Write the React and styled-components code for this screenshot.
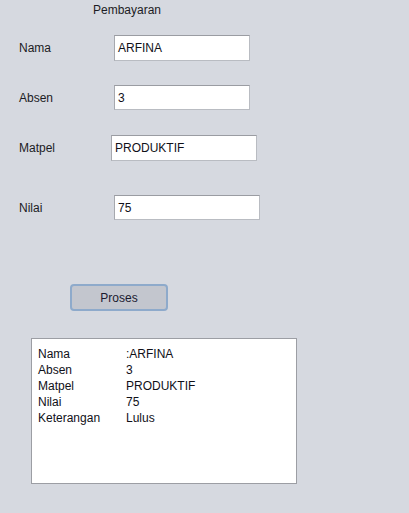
import React from "react";
import styled, { createGlobalStyle } from "styled-components";

const Global = createGlobalStyle`
  html, body {
    margin: 0;
    background: #d6d9e0;
  }
  body {
    font-family: "Liberation Sans", Arial, sans-serif;
    font-size: 12px;
    color: #1c1c24;
  }
`;

const Frame = styled.div`
  width: 409px;
  height: 513px;
  background: #d6d9e0;
  display: flex;
  flex-direction: column;
  overflow: hidden;
`;

const Title = styled.div`
  margin: 3px 0 0 93px;
  line-height: 14px;
  height: 14px;
`;

const Row = styled.div`
  display: flex;
  align-items: center;
  margin-top: ${(p) => p.$top}px;
  padding-left: 19px;
  height: ${(p) => p.$h}px;
`;

const Label = styled.span`
  width: ${(p) => p.$w || 95}px;
  flex: none;
`;

const Field = styled.div`
  box-sizing: border-box;
  width: ${(p) => p.$w}px;
  height: 100%;
  background: #fff;
  border: 1px solid #b9bcc2;
  border-top-color: #9a9ca2;
  border-left-color: #a6a8ae;
  display: flex;
  align-items: center;
  padding-left: 3px;
  color: #101018;
`;

const Button = styled.button`
  box-sizing: border-box;
  margin: 64px 0 0 70px;
  width: 98px;
  height: 27px;
  background: #c3c6ce;
  border: 2px solid #8eaacb;
  border-radius: 4px;
  font-family: inherit;
  font-size: 12px;
  color: #1a1a30;
  padding: 0;
`;

const Output = styled.div`
  box-sizing: border-box;
  margin: 27px 0 0 31px;
  width: 266px;
  height: 146px;
  background: #fff;
  border: 1px solid #9c9ea4;
  padding: 7px 6px;
  display: grid;
  grid-template-columns: 88px 1fr;
  grid-auto-rows: 16px;
  align-content: start;
  line-height: 16px;
  color: #101018;
`;

const fields = [
  { label: "Nama", value: "ARFINA", top: 18, h: 26, w: 136, lw: 95 },
  { label: "Absen", value: "3", top: 24, h: 25, w: 136, lw: 95 },
  { label: "Matpel", value: "PRODUKTIF", top: 25, h: 26, w: 146, lw: 92 },
  { label: "Nilai", value: "75", top: 34, h: 25, w: 146, lw: 95 },
];

const result = [
  ["Nama", ":ARFINA"],
  ["Absen", "3"],
  ["Matpel", "PRODUKTIF"],
  ["Nilai", "75"],
  ["Keterangan", "Lulus"],
];

export default function App() {
  return (
    <Frame>
      <Global />
      <Title>Pembayaran</Title>
      {fields.map((f) => (
        <Row key={f.label} $top={f.top} $h={f.h}>
          <Label $w={f.lw}>{f.label}</Label>
          <Field $w={f.w}>{f.value}</Field>
        </Row>
      ))}
      <div>
        <Button>Proses</Button>
      </div>
      <Output>
        {result.map(([k, v]) => (
          <React.Fragment key={k}>
            <span>{k}</span>
            <span>{v}</span>
          </React.Fragment>
        ))}
      </Output>
    </Frame>
  );
}
